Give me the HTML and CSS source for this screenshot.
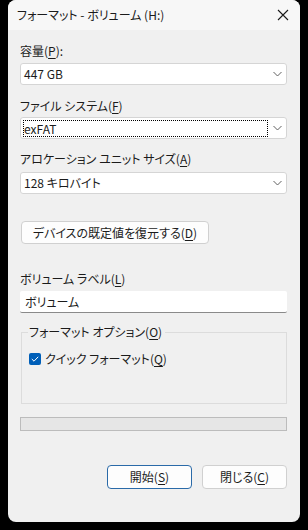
FILE: index.html
```html
<!DOCTYPE html>
<html lang="ja">
<head>
<meta charset="utf-8">
<link rel="stylesheet" href="styles.css">
</head>
<body>
<div class="window">
  <div class="titlebar">
    <span class="title">フォーマット - ボリューム (H:)</span>
    <svg class="close" width="12" height="12" viewBox="0 0 12 12"><path d="M1 1L11 11M11 1L1 11" stroke="#1a1a1a" stroke-width="1.1" fill="none"/></svg>
  </div>
  <div class="content">
    <div class="label l1">容量(<u>P</u>):</div>
    <div class="combo"><span>447 GB</span><svg class="chev" width="9" height="6" viewBox="0 0 9 6"><path d="M0.5 1L4.5 5L8.5 1" stroke="#606060" stroke-width="1" fill="none"/></svg></div>

    <div class="label l2">ファイル システム(<u>F</u>)</div>
    <div class="combo focus"><span class="focusbox">exFAT</span><svg class="chev" width="9" height="6" viewBox="0 0 9 6"><path d="M0.5 1L4.5 5L8.5 1" stroke="#606060" stroke-width="1" fill="none"/></svg></div>

    <div class="label l3">アロケーション ユニット サイズ(<u>A</u>)</div>
    <div class="combo"><span>128 キロバイト</span><svg class="chev" width="9" height="6" viewBox="0 0 9 6"><path d="M0.5 1L4.5 5L8.5 1" stroke="#606060" stroke-width="1" fill="none"/></svg></div>

    <button class="btn restore">デバイスの既定値を復元する(<u>D</u>)</button>

    <div class="label l4">ボリューム ラベル(<u>L</u>)</div>
    <div class="textbox">ボリューム</div>

    <fieldset class="group">
      <legend>フォーマット オプション(<u>O</u>)</legend>
      <div class="check-row">
        <span class="checkbox"><svg width="8" height="6" viewBox="0 0 8 6"><path d="M0.8 3L3 5.2L7.2 0.8" stroke="#fff" stroke-width="1" fill="none"/></svg></span>
        <span>クイック フォーマット(<u>Q</u>)</span>
      </div>
    </fieldset>

    <div class="progress"></div>

    <div class="actions">
      <button class="btn default">開始(<u>S</u>)</button>
      <button class="btn">閉じる(<u>C</u>)</button>
    </div>
  </div>
</div>
</body>
</html>
```
FILE: styles.css
```css
html, body {
  margin: 0;
  padding: 0;
  background: #000;
}
body {
  width: 308px;
  height: 530px;
  overflow: hidden;
  font-family: "Noto Sans CJK JP", "Noto Sans", sans-serif;
  font-size: 12px;
  font-feature-settings: "palt";
  color: #1b1b1b;
}
.window {
  margin-left: 8px;
  width: 292px;
  height: 522px;
  background: #f0f0f0;
  border-radius: 8px;
  overflow: hidden;
  display: flex;
  flex-direction: column;
}
.titlebar {
  height: 30px;
  background: #f7f7f7;
  display: flex;
  align-items: center;
  justify-content: space-between;
  padding: 0 11px 0 9px;
  box-sizing: border-box;
}
.title {
  font-size: 12px;
  line-height: 16px;
  margin-top: -1px;
}
.close {
  display: block;
  margin-top: -1px;
}
.content {
  padding: 0 13px 0 12px;
  display: flex;
  flex-direction: column;
}
.label {
  line-height: 16px;
  height: 16px;
}
u {
  text-decoration-thickness: 1px;
  text-underline-offset: 2px;
}
.l1 { margin-top: 13px; margin-bottom: 4px; }
.l2 { margin-top: 13px; margin-bottom: 3px; }
.l3 { margin-top: 12px; margin-bottom: 5px; }
.l4 { margin-top: 27px; margin-bottom: 4px; }
.combo {
  height: 22px;
  box-sizing: border-box;
  background: #fff;
  border: 1px solid #d5d5d5;
  border-radius: 3px;
  display: flex;
  align-items: center;
  justify-content: space-between;
  padding: 0 4px 0 3px;
  line-height: 16px;
}
.focusbox {
  flex: 0 0 245px;
  height: 17px;
  box-sizing: border-box;
  border: 1px dotted #000;
  line-height: 15px;
  margin-left: -1px;
}
.chev {
  display: block;
}
.btn {
  font-family: inherit;
  font-size: 12px;
  font-feature-settings: "palt";
  color: #1b1b1b;
  background: #fdfdfd;
  border: 1px solid #d0d0d0;
  border-radius: 4px;
  padding: 0;
  line-height: 16px;
  box-sizing: border-box;
}
.restore {
  margin-top: 27px;
  width: 188px;
  height: 23px;
  margin-left: 1px;
}
.textbox {
  height: 22px;
  box-sizing: border-box;
  background: #fff;
  border-bottom: 1px solid #8a8a8a;
  border-radius: 2px;
  padding: 0 5px;
  line-height: 21px;
}
.group {
  margin: 11px 0 0 1px;
  padding: 11px 7px 0 7px;
  height: 80px;
  box-sizing: border-box;
  border: 1px solid #dcdcdc;
  min-width: 0;
}
.group legend {
  padding: 0 3px 0 1px;
  line-height: 16px;
  margin-left: -1px;
}
.check-row {
  display: flex;
  align-items: center;
  gap: 4px;
  line-height: 16px;
}
.checkbox {
  width: 12px;
  height: 12px;
  border-radius: 2px;
  background: #005fb8;
  display: flex;
  align-items: center;
  justify-content: center;
}
.checkbox svg { display: block; }
.progress {
  margin-top: 13px;
  height: 14px;
  box-sizing: border-box;
  background: #e6e6e6;
  border: 1px solid #bcbcbc;
}
.actions {
  margin-top: 34px;
  display: flex;
  justify-content: flex-end;
  gap: 10px;
}
.actions .btn {
  width: 85px;
  height: 24px;
}
.btn.default {
  border-color: #2a6aa8;
}
```
